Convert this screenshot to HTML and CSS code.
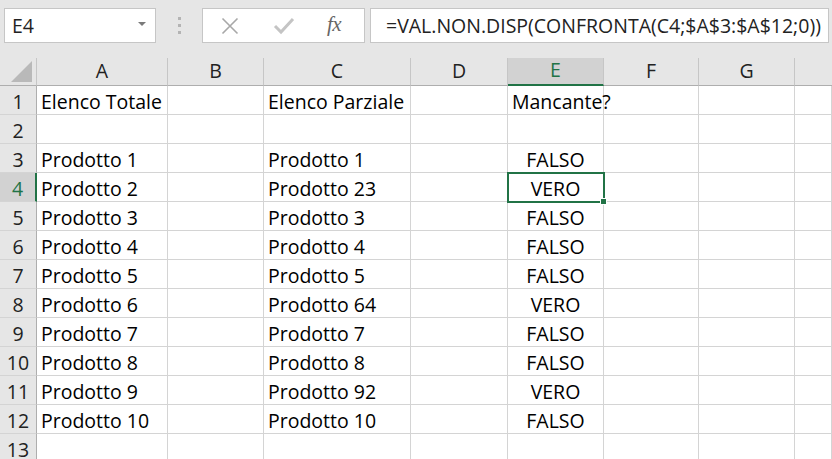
FILE: index.html
```html
<!DOCTYPE html>
<html>
<head>
<meta charset="utf-8">
<link rel="stylesheet" href="styles.css">
</head>
<body>
<div class="topbar">
  <div class="namebox">
    <span class="name">E4</span>
    <span class="ddarrow"></span>
  </div>
  <div class="dots"><i></i><i></i><i></i></div>
  <div class="fbuttons">
    <svg class="ico-x" width="20" height="20" viewBox="0 0 20 20"><path d="M2.5 2.5 L17.5 17.5 M17.5 2.5 L2.5 17.5" stroke="#a8a8a8" stroke-width="1.6" fill="none"/></svg>
    <svg class="ico-check" width="22" height="20" viewBox="0 0 22 20"><path d="M2 10 L8 16 L20 3" stroke="#c4c4c4" stroke-width="3" fill="none"/></svg>
    <span class="fx">fx</span>
  </div>
  <div class="formula">=VAL.NON.DISP(CONFRONTA(C4;$A$3:$A$12;0))</div>
</div>
<div class="sheet" id="sheet">
  <div class="hd corner"><span class="tri"></span></div>
  <div class="hd col">A</div>
  <div class="hd col">B</div>
  <div class="hd col">C</div>
  <div class="hd col">D</div>
  <div class="hd col sel">E</div>
  <div class="hd col">F</div>
  <div class="hd col">G</div>
  <div class="hd col last"></div>

  <div class="hd row">1</div><div class="c">Elenco Totale</div><div class="c"></div><div class="c">Elenco Parziale</div><div class="c"></div><div class="c">Mancante?</div><div class="c"></div><div class="c"></div><div class="c"></div>
  <div class="hd row">2</div><div class="c"></div><div class="c"></div><div class="c"></div><div class="c"></div><div class="c"></div><div class="c"></div><div class="c"></div><div class="c"></div>
  <div class="hd row">3</div><div class="c">Prodotto 1</div><div class="c"></div><div class="c">Prodotto 1</div><div class="c"></div><div class="c ctr">FALSO</div><div class="c"></div><div class="c"></div><div class="c"></div>
  <div class="hd row rsel">4</div><div class="c">Prodotto 2</div><div class="c"></div><div class="c">Prodotto 23</div><div class="c"></div><div class="c ctr active">VERO<span class="handle"></span></div><div class="c"></div><div class="c"></div><div class="c"></div>
  <div class="hd row">5</div><div class="c">Prodotto 3</div><div class="c"></div><div class="c">Prodotto 3</div><div class="c"></div><div class="c ctr">FALSO</div><div class="c"></div><div class="c"></div><div class="c"></div>
  <div class="hd row">6</div><div class="c">Prodotto 4</div><div class="c"></div><div class="c">Prodotto 4</div><div class="c"></div><div class="c ctr">FALSO</div><div class="c"></div><div class="c"></div><div class="c"></div>
  <div class="hd row">7</div><div class="c">Prodotto 5</div><div class="c"></div><div class="c">Prodotto 5</div><div class="c"></div><div class="c ctr">FALSO</div><div class="c"></div><div class="c"></div><div class="c"></div>
  <div class="hd row">8</div><div class="c">Prodotto 6</div><div class="c"></div><div class="c">Prodotto 64</div><div class="c"></div><div class="c ctr">VERO</div><div class="c"></div><div class="c"></div><div class="c"></div>
  <div class="hd row">9</div><div class="c">Prodotto 7</div><div class="c"></div><div class="c">Prodotto 7</div><div class="c"></div><div class="c ctr">FALSO</div><div class="c"></div><div class="c"></div><div class="c"></div>
  <div class="hd row">10</div><div class="c">Prodotto 8</div><div class="c"></div><div class="c">Prodotto 8</div><div class="c"></div><div class="c ctr">FALSO</div><div class="c"></div><div class="c"></div><div class="c"></div>
  <div class="hd row">11</div><div class="c">Prodotto 9</div><div class="c"></div><div class="c">Prodotto 92</div><div class="c"></div><div class="c ctr">VERO</div><div class="c"></div><div class="c"></div><div class="c"></div>
  <div class="hd row">12</div><div class="c">Prodotto 10</div><div class="c"></div><div class="c">Prodotto 10</div><div class="c"></div><div class="c ctr">FALSO</div><div class="c"></div><div class="c"></div><div class="c"></div>
  <div class="hd row">13</div><div class="c"></div><div class="c"></div><div class="c"></div><div class="c"></div><div class="c"></div><div class="c"></div><div class="c"></div><div class="c"></div>
</div>
</body>
</html>
```
FILE: styles.css
```css
html, body {
  margin: 0;
  padding: 0;
  width: 832px;
  height: 459px;
  overflow: hidden;
  background: #e6e6e6;
  font-family: "Open Sans", "Noto Sans", sans-serif;
  color: #000;
}
.topbar {
  height: 58px;
  box-sizing: border-box;
  padding-top: 8px;
  display: flex;
  align-items: flex-start;
  background: #e6e6e6;
}
.namebox {
  margin-left: 4px;
  width: 152px;
  height: 35px;
  box-sizing: border-box;
  border: 1px solid #c6c6c6;
  background: #fff;
  display: flex;
  align-items: center;
  justify-content: space-between;
  padding: 0 9px 0 7px;
  flex: none;
}
.name {
  font-size: 19.5px;
  color: #222;
}
.ddarrow {
  width: 0;
  height: 0;
  border-left: 4px solid transparent;
  border-right: 4px solid transparent;
  border-top: 4px solid #7a7a7a;
  margin-top: -3px;
}
.dots {
  width: 46px;
  height: 35px;
  display: flex;
  flex-direction: column;
  align-items: center;
  justify-content: center;
  gap: 4px;
  flex: none;
}
.dots i {
  display: block;
  width: 3px;
  height: 3px;
  background: #b4b4b4;
}
.fbuttons {
  width: 163px;
  height: 35px;
  box-sizing: border-box;
  border: 1px solid #c6c6c6;
  background: #fff;
  display: flex;
  align-items: center;
  padding-left: 17px;
  flex: none;
}
.ico-x { margin-right: 33px; }
.ico-check { margin-right: 32px; }
.fx {
  font-family: "Liberation Serif", serif;
  font-style: italic;
  font-size: 21px;
  color: #666;
  letter-spacing: -0.5px;
  margin-top: -3px;
}
.formula {
  margin-left: 5px;
  width: 459px;
  height: 35px;
  box-sizing: border-box;
  border: 1px solid #c6c6c6;
  background: #fff;
  font-size: 19.5px;
  line-height: 33px;
  padding-left: 15px;
  color: #222;
  white-space: nowrap;
  flex: none;
}
.sheet {
  display: grid;
  grid-template-columns: 37px 131px 96px 147px 97px 96px 95px 96px 1fr;
  grid-template-rows: 28px repeat(13, 29px);
  background: #fff;
}
.hd {
  background: #e6e6e6;
  box-sizing: border-box;
  font-size: 19.5px;
  line-height: 1.36;
  color: #222;
  display: flex;
  justify-content: center;
}
.col {
  align-items: flex-end;
  border-right: 1px solid #c6c6c6;
  border-bottom: 1px solid #aeaeae;
  background: #e6e6e6;
}
.col.last { border-right: none; }
.col.sel {
  background: #d2d2d2;
  color: #217346;
  border-bottom: 2px solid #217346;
}
.corner {
  border-right: 1px solid #c6c6c6;
  border-bottom: 1px solid #aeaeae;
  position: relative;
}
.tri {
  position: absolute;
  right: 4px;
  bottom: 3px;
  width: 0;
  height: 0;
  border-left: 21px solid transparent;
  border-bottom: 21px solid #b9b9b9;
}
.row {
  align-items: flex-start;
  padding-top: 3px;
  border-right: 1px solid #aeaeae;
  border-bottom: 1px solid #d4d4d4;
}
.row.rsel {
  background: #d2d2d2;
  color: #217346;
  border-right: 2px solid #217346;
}
.c {
  box-sizing: border-box;
  border-right: 1px solid #d4d4d4;
  border-bottom: 1px solid #d4d4d4;
  font-size: 19.5px;
  line-height: 1.36;
  padding-left: 4px;
  padding-top: 3px;
  display: flex;
  align-items: flex-start;
  white-space: nowrap;
  overflow: visible;
}
.c.ctr { justify-content: center; padding-left: 0; }
.c.active {
  position: relative;
  outline: 2px solid #217346;
  outline-offset: -1px;
  z-index: 2;
}
.handle {
  position: absolute;
  right: -4px;
  bottom: -4px;
  width: 5px;
  height: 5px;
  background: #217346;
  border: 1px solid #fff;
}
```
